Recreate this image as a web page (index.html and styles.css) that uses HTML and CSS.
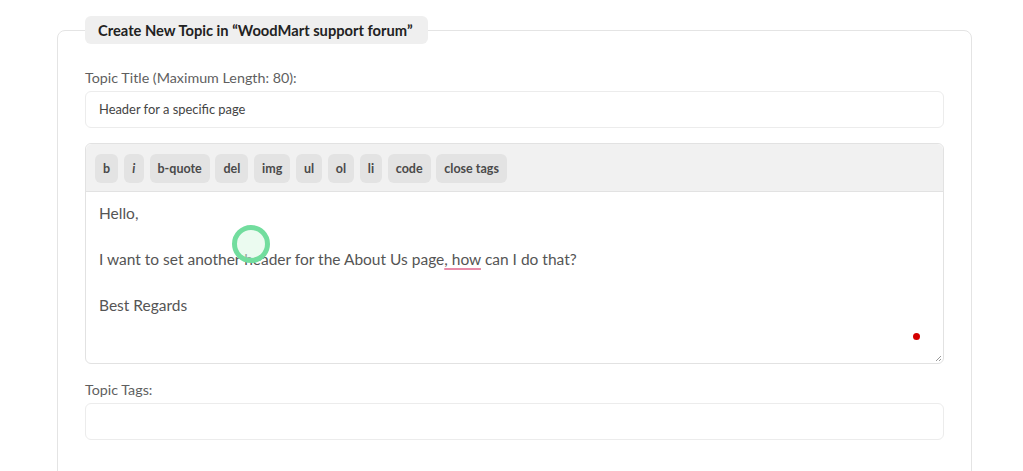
FILE: index.html
```html
<!DOCTYPE html>
<html lang="en">
<head>
  <meta charset="UTF-8">
  <meta name="viewport" content="width=device-width, initial-scale=1.0">
  <title>Create New Topic</title>
  <link rel="stylesheet" href="styles.css">
</head>
<body>
  <form class="new-topic">
    <fieldset class="topic-box">
      <legend>Create New Topic in “WoodMart support forum”</legend>

      <label class="field-label" for="topicTitle">Topic Title (Maximum Length: 80):</label>
      <div class="text-input" id="topicTitle">Header for a specific page</div>

      <div class="editor">
        <div class="toolbar">
          <span class="tag-btn">b</span>
          <span class="tag-btn italic">i</span>
          <span class="tag-btn">b-quote</span>
          <span class="tag-btn">del</span>
          <span class="tag-btn">img</span>
          <span class="tag-btn">ul</span>
          <span class="tag-btn">ol</span>
          <span class="tag-btn">li</span>
          <span class="tag-btn">code</span>
          <span class="tag-btn">close tags</span>
        </div>
        <div class="editor-body">
          <p>Hello,</p>
          <p>I want to set another header for the About Us page<span class="typo">, how</span> can I do that?</p>
          <p>Best Regards</p>
          <span class="rec-dot"></span>
          <svg class="grip" width="8" height="8" viewBox="0 0 8 8">
            <path d="M7 2 L2 7 M7 5 L5 7" stroke="#999" stroke-width="1"/>
          </svg>
        </div>
        <span class="touch"></span>
      </div>

      <label class="field-label" for="topicTags">Topic Tags:</label>
      <div class="text-input" id="topicTags"></div>
    </fieldset>
  </form>
</body>
</html>
```

FILE: styles.css
```css
body {
  margin: 0;
  background-color: #fff;
  font-family: Lato, "Open Sans", sans-serif;
  color: #555;
}

.new-topic {
  padding: 16px 0 0 57px;
  width: 915px;
}

.topic-box {
  margin: 0;
  border: 1px solid #e4e4e4;
  border-radius: 8px;
  padding: 8px 27px 40px 27px;
}

.topic-box legend {
  background-color: #efefef;
  border-radius: 6px;
  padding: 0 15px 0 13px;
  height: 28px;
  line-height: 28px;
  font-size: 14.7px;
  font-weight: bold;
  color: #222;
}

.field-label {
  display: block;
  font-size: 14.3px;
  line-height: 16px;
  color: #5f5f5f;
  margin: 18px 0 5px 0;
}

.text-input {
  height: 35px;
  border: 1px solid #ececec;
  border-radius: 6px;
  padding: 0 13px;
  font-size: 12.9px;
  line-height: 35px;
  color: #444;
}

.editor {
  position: relative;
  margin-top: 15px;
  border: 1px solid #e2e2e2;
  border-radius: 6px;
}

.toolbar {
  display: flex;
  gap: 5.7px;
  background-color: #f1f1f1;
  border-bottom: 1px solid #e2e2e2;
  border-radius: 6px 6px 0 0;
  padding: 10px 9px 8px 9px;
}

.tag-btn {
  background-color: #e3e3e3;
  border-radius: 6px;
  height: 29px;
  line-height: 29px;
  padding: 0 8px;
  font-size: 12.5px;
  font-weight: bold;
  color: #4a4a4a;
}

.tag-btn.italic {
  font-style: italic;
  padding: 0 8.5px;
}

.editor-body {
  position: relative;
  height: 151px;
  padding: 10px 13px;
  font-size: 15.5px;
  line-height: 23px;
  color: #555;
}

.editor-body p {
  margin: 0 0 23px 0;
}

.typo {
  text-decoration: underline;
  text-decoration-color: #e88aa8;
  text-decoration-thickness: 2px;
  text-underline-offset: 3px;
}

.rec-dot {
  position: absolute;
  right: 23px;
  top: 141px;
  width: 7px;
  height: 7px;
  border-radius: 50%;
  background-color: #d40000;
}

.grip {
  position: absolute;
  right: 1px;
  bottom: 1px;
}

.touch {
  position: absolute;
  left: 146px;
  top: 81px;
  width: 28px;
  height: 28px;
  border: 5px solid #72dd9e;
  border-radius: 50%;
  background-color: rgba(215, 248, 226, 0.5);
}
```
